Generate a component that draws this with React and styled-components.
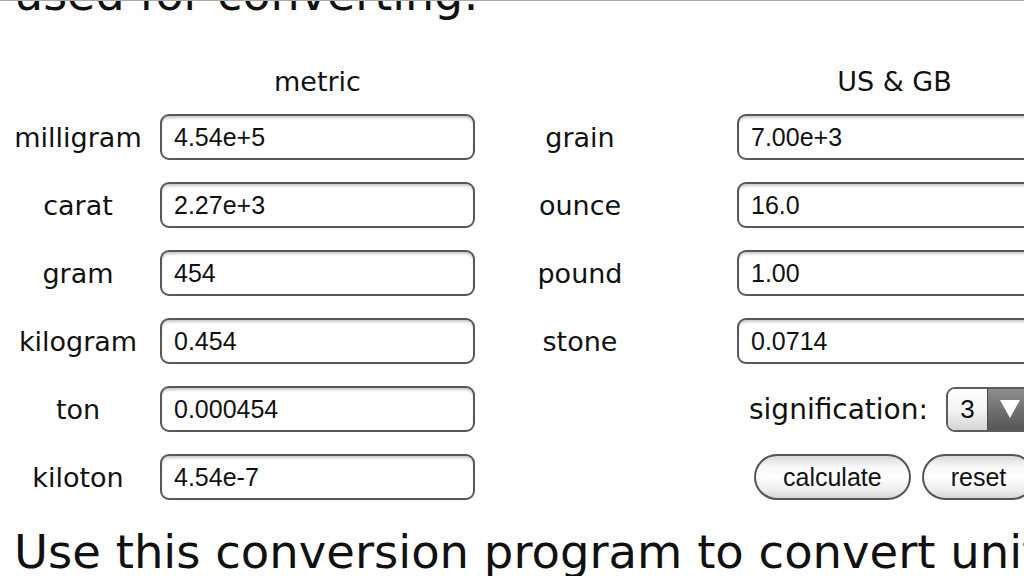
import React from "react";
import styled, { createGlobalStyle } from "styled-components";

const COLS = "160px 315px 262px 315px";

const Global = createGlobalStyle`
  html, body {
    margin: 0;
    padding: 0;
    width: 1024px;
    height: 576px;
    overflow: hidden;
    background: #fff;
  }
  body {
    border-top: 1px solid #a9a9a9;
    box-sizing: border-box;
    color: #111;
    font-family: "DejaVu Sans", Verdana, sans-serif;
  }
`;

const Page = styled.div`
  width: 1100px;
`;

const BigText = styled.p`
  margin: ${(p) => p.$mt}px 0 0 14px;
  font-size: ${(p) => p.$size}px;
  line-height: 54px;
  white-space: nowrap;
`;

const HeadRow = styled.div`
  display: grid;
  grid-template-columns: ${COLS};
  margin: 45px 0 16px;
`;

const HeadCell = styled.div`
  grid-column: ${(p) => p.$col};
  text-align: center;
  font-size: 27px;
  line-height: 32px;
`;

const Table = styled.div`
  display: grid;
  grid-template-columns: ${COLS};
  grid-auto-rows: 46px;
  row-gap: 22px;
`;

const Label = styled.div`
  grid-column: ${(p) => p.$col};
  display: flex;
  align-items: center;
  justify-content: center;
  padding-right: ${(p) => p.$pr || 0}px;
  font-size: 27px;
`;

const Field = styled.input`
  grid-column: ${(p) => p.$col};
  box-sizing: border-box;
  width: 100%;
  height: 46px;
  margin: 0;
  padding: 0 12px;
  border: 2px solid #585858;
  border-radius: 9px;
  background: #fff;
  box-shadow: inset 0 3px 3px -1px rgba(0, 0, 0, 0.22);
  font-family: "Liberation Sans", Arial, sans-serif;
  font-size: 25px;
  color: #111;
  outline: none;
`;

const ControlCell = styled.div`
  grid-column: 4;
  display: flex;
  align-items: center;
  gap: ${(p) => p.$gap}px;
  padding-left: ${(p) => p.$pl}px;
  white-space: nowrap;
`;

const SigLabel = styled.span`
  font-size: 28px;
`;

const SelectBox = styled.div`
  display: flex;
  height: 45px;
  box-sizing: border-box;
  border: 2px solid #5c5c5c;
  border-radius: 9px;
  overflow: hidden;
`;

const SelectValue = styled.div`
  width: 39px;
  display: flex;
  align-items: center;
  justify-content: center;
  background: linear-gradient(to bottom, #ffffff 0%, #f4f4f4 50%, #d4d4d4 100%);
  font-family: "Liberation Sans", Arial, sans-serif;
  font-size: 26px;
`;

const SelectArrow = styled.div`
  width: 46px;
  display: flex;
  align-items: center;
  justify-content: flex-start;
  padding-left: 12px;
  background: linear-gradient(to bottom, #8e8e8e 0%, #6e6e6e 55%, #565656 100%);
  border-left: 1px solid #4a4a4a;

  &::after {
    content: "";
    width: 0;
    height: 0;
    border-left: 10px solid transparent;
    border-right: 10px solid transparent;
    border-top: 18px solid #fff;
  }
`;

const PillButton = styled.button`
  height: 46px;
  margin: 0;
  padding: 0 ${(p) => p.$px}px;
  box-sizing: border-box;
  border: 2px solid #555;
  border-radius: 23px;
  background: linear-gradient(
    to bottom,
    #d9d9d9 0%,
    #f7f7f7 25%,
    #ffffff 50%,
    #eeeeee 80%,
    #d6d6d6 100%
  );
  font-family: "Liberation Sans", Arial, sans-serif;
  font-size: 25px;
  color: #111;
  flex-shrink: 0;
`;

const metric = [
  ["milligram", "4.54e+5"],
  ["carat", "2.27e+3"],
  ["gram", "454"],
  ["kilogram", "0.454"],
  ["ton", "0.000454"],
  ["kiloton", "4.54e-7"],
];

const usgb = [
  ["grain", "7.00e+3"],
  ["ounce", "16.0"],
  ["pound", "1.00"],
  ["stone", "0.0714"],
];

export default function App() {
  return (
    <>
      <Global />
      <Page>
        <BigText $mt={-34} $size={46}>used for converting:</BigText>
        <HeadRow>
          <HeadCell $col={2}>metric</HeadCell>
          <HeadCell $col={4}>US &amp; GB</HeadCell>
        </HeadRow>
        <Table>
          {metric.map(([name, val], i) => (
            <React.Fragment key={name}>
              <Label $col={1} $pr={4}>{name}</Label>
              <Field $col={2} readOnly value={val} />
              {usgb[i] ? (
                <>
                  <Label $col={3} $pr={52}>{usgb[i][0]}</Label>
                  <Field $col={4} readOnly value={usgb[i][1]} />
                </>
              ) : i === 4 ? (
                <ControlCell $gap={18} $pl={12}>
                  <SigLabel>signification:</SigLabel>
                  <SelectBox>
                    <SelectValue>3</SelectValue>
                    <SelectArrow />
                  </SelectBox>
                </ControlCell>
              ) : (
                <ControlCell $gap={11} $pl={17}>
                  <PillButton $px={27}>calculate</PillButton>
                  <PillButton $px={27}>reset</PillButton>
                </ControlCell>
              )}
            </React.Fragment>
          ))}
        </Table>
        <BigText $mt={25} $size={46.5}>Use this conversion program to convert units</BigText>
      </Page>
    </>
  );
}
